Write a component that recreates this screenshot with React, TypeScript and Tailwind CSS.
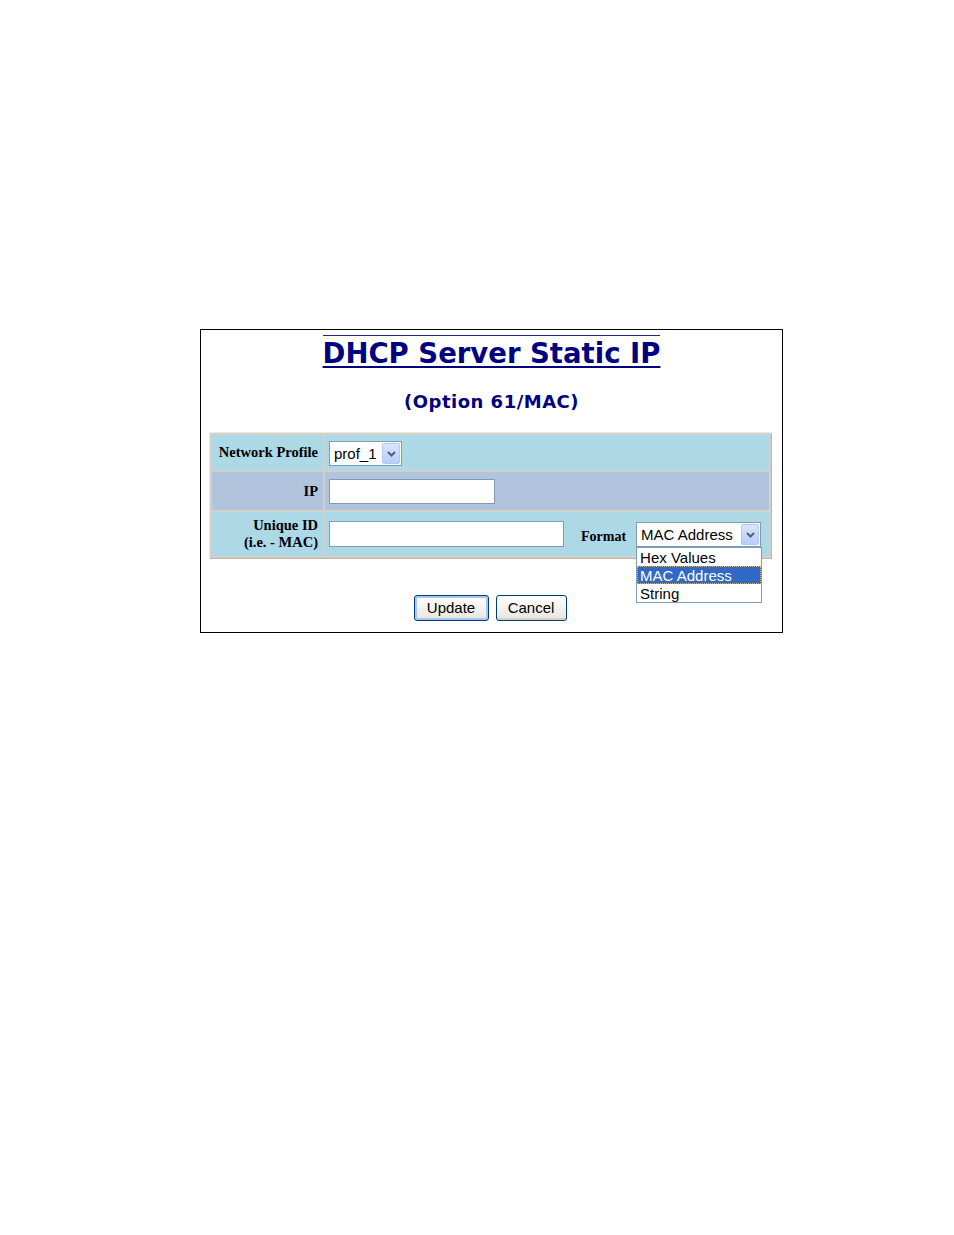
import React from "react";

const verdana = "font-['DejaVu_Sans',Verdana,sans-serif]";
const times = "font-['Liberation_Serif','Times_New_Roman',serif]";
const arial = "font-['Liberation_Sans',Arial,sans-serif]";

function Arrow() {
  return (
    <span className="flex h-full w-[18px] items-center justify-center rounded-[2px] border border-[#b7c8f0] bg-gradient-to-b from-[#dbe5fd] to-[#b8cdf9]">
      <svg width="9" height="6" viewBox="0 0 9 6">
        <path d="M1 1 L4.5 4.5 L8 1" fill="none" stroke="#4d6185" strokeWidth="2" />
      </svg>
    </span>
  );
}

function Select({ value, width, open }: { value: string; width: string; open?: boolean }) {
  return (
    <div className={`relative ${width}`}>
      <div className={`flex h-[25px] items-center border border-[#7f9db9] bg-white p-[1px] ${arial} text-[15px] text-black`}>
        <span className="flex-1 pl-[3px] leading-none whitespace-nowrap">{value}</span>
        <Arrow />
      </div>
      {open && (
        <ul className={`absolute left-0 top-full z-10 w-[126px] border border-[#7f9db9] bg-white ${arial} text-[15px] leading-[17px] text-black`}>
          <li className="h-[18px] border border-transparent pl-[2px]">Hex Values</li>
          <li className="h-[18px] border border-dotted border-[#d8b060] bg-[#316ac5] pl-[2px] text-white">MAC Address</li>
          <li className="h-[18px] border border-transparent pl-[2px]">String</li>
        </ul>
      )}
    </div>
  );
}

function Input({ width, height }: { width: string; height: string }) {
  return <div className={`${width} ${height} border border-[#7f9db9] bg-white`} />;
}

function Button({ label, primary }: { label: string; primary?: boolean }) {
  return (
    <button
      className={`h-[26px] rounded-[3px] border border-[#003c74] bg-gradient-to-b from-white to-[#e6e5dd] ${arial} text-[15px] text-black ${
        primary ? "w-[75px] shadow-[inset_0_0_0_2px_#a9c5f0]" : "w-[71px] shadow-[inset_0_-2px_0_#d6d0c5]"
      }`}
    >
      {label}
    </button>
  );
}

function Label({ children }: { children: React.ReactNode }) {
  return (
    <div className={`flex items-center justify-end pr-[5px] text-right ${times} text-[14.5px] font-bold leading-[17px] text-black`}>
      {children}
    </div>
  );
}

export default function App() {
  return (
    <div className="min-h-[1235px] bg-white pt-[329px]">
      <div className="ml-[200px] h-[304px] w-[583px] border border-black">
        <div className="pt-[5px] text-center">
          <h1
            className={`inline-block border-t border-[#23238e] ${verdana} text-[27.5px] font-bold leading-[35px] text-[#000080] underline decoration-[1.5px] underline-offset-[3px]`}
          >
            DHCP Server Static IP
          </h1>
        </div>
        <p className={`mt-[19px] text-center ${verdana} text-[18px] font-bold leading-[24px] tracking-[0.5px] text-[#000080]`}>
          (Option 61/MAC)
        </p>

        <div className="ml-[8px] mt-[18px] grid w-[562px] grid-cols-[111px_1fr] grid-rows-[35px_38px_44px] gap-[2px] border-t border-l border-[#ece9e0] bg-[#d4d0c8] p-[2px] shadow-[1px_1px_0_#b9b5ab]">
          <div className="contents">
            <div className="bg-[#add8e6]">
              <Label>
                <span className="flex h-[35px] items-center">Network Profile</span>
              </Label>
            </div>
            <div className="bg-[#add8e6] pl-[4px] pt-[6px]">
              <Select value="prof_1" width="w-[73px]" />
            </div>
          </div>

          <div className="contents">
            <div className="bg-[#b0c4de]">
              <Label>
                <span className="flex h-[38px] items-center">IP</span>
              </Label>
            </div>
            <div className="bg-[#b0c4de] pl-[4px] pt-[7px]">
              <Input width="w-[166px]" height="h-[25px]" />
            </div>
          </div>

          <div className="contents">
            <div className="bg-[#add8e6]">
              <Label>
                <span className="flex h-[44px] flex-col justify-center">
                  <span>Unique ID</span>
                  <span>(i.e. - MAC)</span>
                </span>
              </Label>
            </div>
            <div className="flex items-start bg-[#add8e6] pl-[4px] pt-[9px]">
              <Input width="w-[235px]" height="h-[26px]" />
              <span className={`ml-[17px] mr-[10px] mt-[7px] ${times} text-[14px] font-bold leading-[17px] text-black`}>
                Format
              </span>
              <div className="mt-[1px]">
                <Select value="MAC Address" width="w-[125px]" open />
              </div>
            </div>
          </div>
        </div>

        <div className="mt-[37px] flex justify-center gap-[7px] pr-[3px]">
          <Button label="Update" primary />
          <Button label="Cancel" />
        </div>
      </div>
    </div>
  );
}
